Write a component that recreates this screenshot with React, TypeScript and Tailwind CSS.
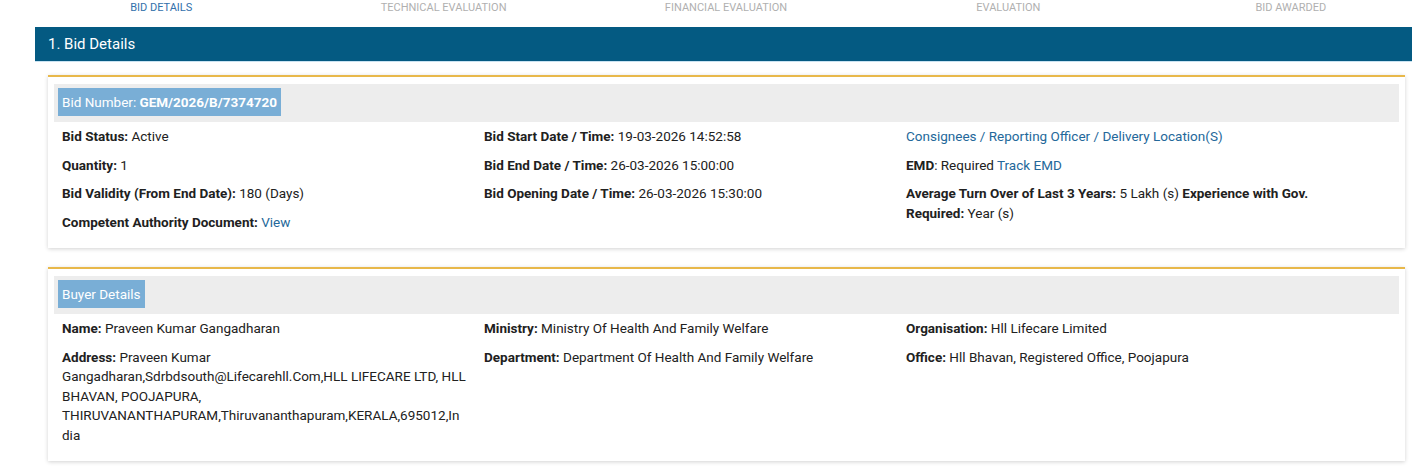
const tabs = ["BID DETAILS", "TECHNICAL EVALUATION", "FINANCIAL EVALUATION", "EVALUATION", "BID AWARDED"];

function Field({ label, children }: { label: string; children?: React.ReactNode }) {
  return (
    <p className="mb-[9px] break-words">
      <span className="font-bold">{label}</span> {children}
    </p>
  );
}

function Card({ badge, children }: { badge: React.ReactNode; children: React.ReactNode }) {
  return (
    <div className="bg-white border-t-2 border-[#e8b84a] shadow-[0_1px_4px_rgba(0,0,0,0.18)] px-[6px] pt-[7px] pb-[7px]">
      <div className="bg-[#ededed] pt-[4px] pb-[6px] px-[4px]">
        <span className="inline-block bg-[#79aed6] text-white text-[13.5px] leading-[28px] px-[4px]">{badge}</span>
      </div>
      <div className="grid grid-cols-[422px_422px_1fr] pl-[8px] pt-[5px] text-[13.5px] leading-[19.5px] text-[#212121]">
        {children}
      </div>
    </div>
  );
}

export default function App() {
  return (
    <div className="bg-white min-h-[466px] font-['Roboto',sans-serif] overflow-hidden">
      <div className="grid grid-cols-5 ml-[20px] w-[1412px] h-[27px] pt-[1px]">
        {tabs.map((t, i) => (
          <div key={t} className={`text-center text-[11px] leading-[13px] ${i === 0 ? "text-[#3270ab]" : "text-[#b0b0b0]"}`}>
            {t}
          </div>
        ))}
      </div>

      <div className="ml-[35px] w-[1400px] h-[35px] bg-[#045a82] border-b border-[#c9e3f2] flex items-center pl-[13px]">
        <h2 className="text-white text-[15px]">1. Bid Details</h2>
      </div>

      <div className="ml-[48px] w-[1357px] mt-[13px] flex flex-col gap-[19px]">
        <Card badge={<>Bid Number: <b>GEM/2026/B/7374720</b></>}>
          <div className="pr-[16px]">
            <Field label="Bid Status:">Active</Field>
            <Field label="Quantity:">1</Field>
            <Field label="Bid Validity (From End Date):">180 (Days)</Field>
            <Field label="Competent Authority Document:">
              <a className="text-[#24689a]">View</a>
            </Field>
          </div>
          <div className="pr-[16px]">
            <Field label="Bid Start Date / Time:">19-03-2026 14:52:58</Field>
            <Field label="Bid End Date / Time:">26-03-2026 15:00:00</Field>
            <Field label="Bid Opening Date / Time:">26-03-2026 15:30:00</Field>
          </div>
          <div className="w-[420px]">
            <p className="mb-[9px] text-[#24689a]">Consignees / Reporting Officer / Delivery Location(S)</p>
            <p className="mb-[9px]">
              <span className="font-bold">EMD</span>: Required <a className="text-[#24689a]">Track EMD</a>
            </p>
            <p className="mb-[9px]">
              <span className="font-bold">Average Turn Over of Last 3 Years:</span> 5 Lakh (s){" "}
              <span className="font-bold">Experience with Gov. Required:</span> Year (s)
            </p>
          </div>
        </Card>

        <Card badge="Buyer Details">
          <div className="pr-[17px]">
            <Field label="Name:">Praveen Kumar Gangadharan</Field>
            <Field label="Address:">
              Praveen Kumar Gangadharan,Sdrbdsouth@Lifecarehll.Com,HLL LIFECARE LTD, HLL BHAVAN, POOJAPURA,
              THIRUVANANTHAPURAM,Thiruvananthapuram,KERALA,695012,India
            </Field>
          </div>
          <div className="pr-[16px]">
            <Field label="Ministry:">Ministry Of Health And Family Welfare</Field>
            <Field label="Department:">Department Of Health And Family Welfare</Field>
          </div>
          <div className="pr-[16px]">
            <Field label="Organisation:">Hll Lifecare Limited</Field>
            <Field label="Office:">Hll Bhavan, Registered Office, Poojapura</Field>
          </div>
        </Card>
      </div>
    </div>
  );
}
